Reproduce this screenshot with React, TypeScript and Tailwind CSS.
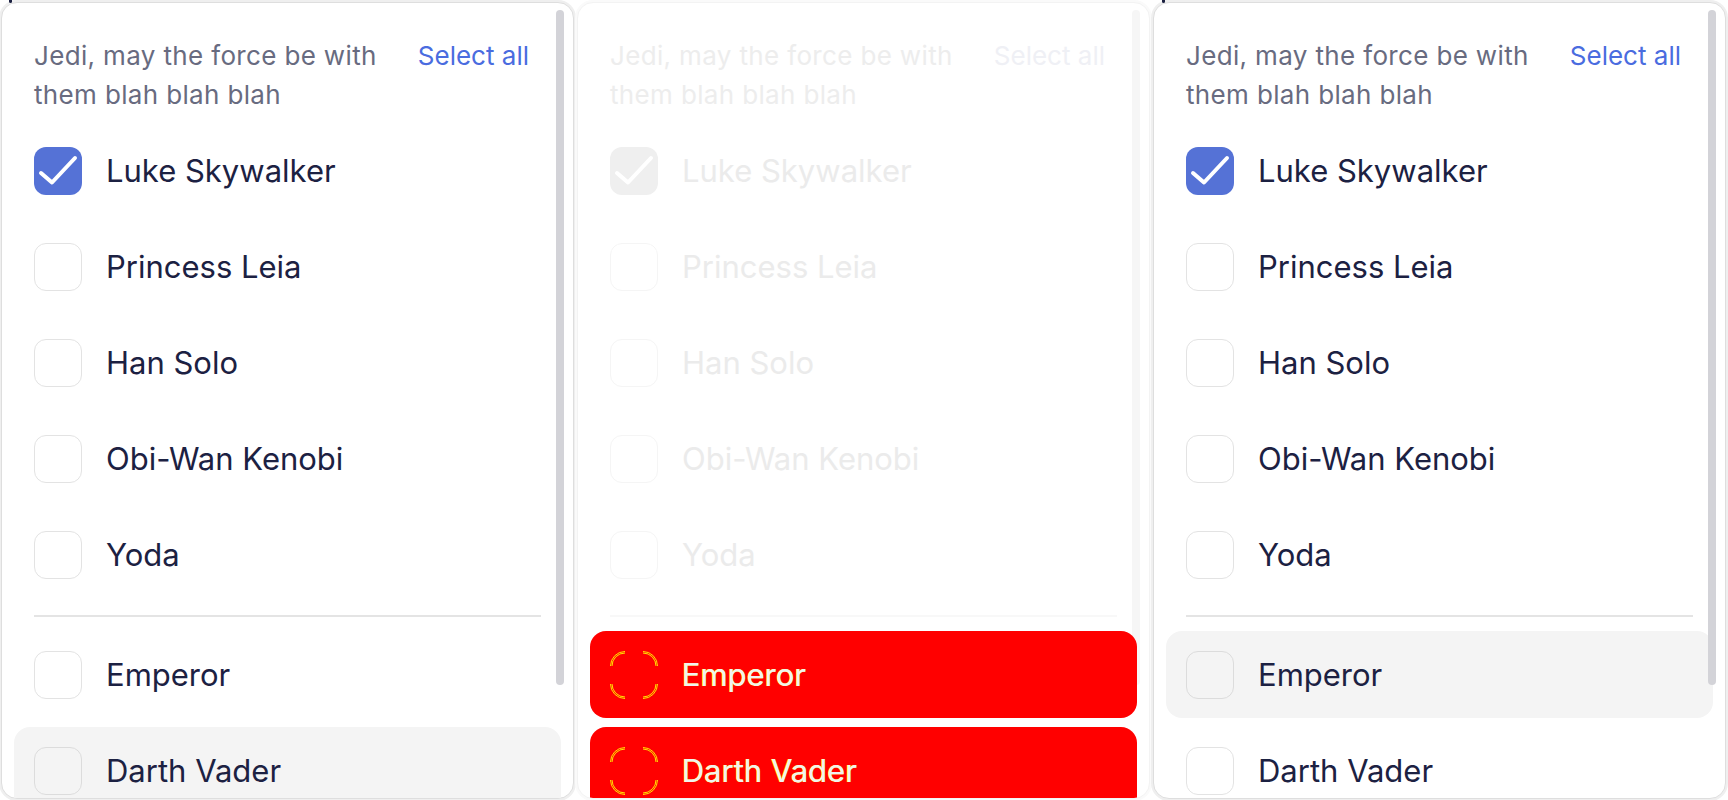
import React from "react";

type Mode = "normal" | "faded";
type RowState = "plain" | "hover" | "red";

const topNames = ["Luke Skywalker", "Princess Leia", "Han Solo", "Obi-Wan Kenobi", "Yoda"];
const bottomNames = ["Emperor", "Darth Vader"];

function CheckMark({ color }: { color: string }) {
  return (
    <svg width="48" height="48" viewBox="0 0 48 48" fill="none">
      <path d="M7 26 L18 35.5 L41 11" stroke={color} strokeWidth="4" strokeLinecap="round" strokeLinejoin="round" />
    </svg>
  );
}

function RedCorners() {
  const c = "#ffff00";
  return (
    <svg width="48" height="48" viewBox="0 0 48 48" fill="none">
      <g stroke={c} strokeWidth="0.9">
        <path d="M0.5 15 A14.5 14.5 0 0 1 15 0.5" />
        <path d="M33 0.5 A14.5 14.5 0 0 1 47.5 15" />
        <path d="M47.5 33 A14.5 14.5 0 0 1 33 47.5" />
        <path d="M15 47.5 A14.5 14.5 0 0 1 0.5 33" />
        <path d="M2 15 A13 13 0 0 1 15 2" />
        <path d="M33 2 A13 13 0 0 1 46 15" />
        <path d="M46 33 A13 13 0 0 1 33 46" />
        <path d="M15 46 A13 13 0 0 1 2 33" />
      </g>
    </svg>
  );
}

function Box({ checked, mode, state }: { checked: boolean; mode: Mode; state: RowState }) {
  if (state === "red") {
    return (
      <div className="w-[48px] h-[48px] shrink-0">
        <RedCorners />
      </div>
    );
  }
  if (checked) {
    return (
      <div
        className={
          mode === "faded"
            ? "w-[48px] h-[48px] shrink-0 rounded-[12px] bg-[#efefef]"
            : "w-[48px] h-[48px] shrink-0 rounded-[12px] bg-[#5572d6]"
        }
      >
        <CheckMark color="#ffffff" />
      </div>
    );
  }
  if (mode === "faded") {
    return <div className="w-[48px] h-[48px] shrink-0 rounded-[12px] border-[1.5px] border-[#f5f5f5] bg-white" />;
  }
  if (state === "hover") {
    return <div className="w-[48px] h-[48px] shrink-0 rounded-[12px] border-[1.5px] border-[#dcdcdc]" />;
  }
  return <div className="w-[48px] h-[48px] shrink-0 rounded-[12px] border-[1.5px] border-[#e3e3e3] bg-white" />;
}

function Row({ name, checked, mode, state }: { name: string; checked: boolean; mode: Mode; state: RowState }) {
  let rowCls = "flex items-center gap-6 h-[87px] pl-5 rounded-[16px] shrink-0";
  if (state === "hover") rowCls += " bg-[#f4f4f4]";
  if (state === "red") rowCls += " relative z-10 bg-[#ff0000]";
  let textCls = "text-[31px] leading-[40px] whitespace-nowrap";
  if (state === "red") textCls += " text-[#f1f1f1] [text-shadow:-0.8px_-0.5px_0_#ffff00]";
  else if (mode === "faded") textCls += " text-[#ebebeb]";
  else textCls += " text-[#1c2142]";
  return (
    <div className={rowCls}>
      <Box checked={checked} mode={mode} state={state} />
      <span className={textCls}>{name}</span>
    </div>
  );
}

function Panel({ mode, hoverName, redNames }: { mode: Mode; hoverName?: string; redNames?: string[] }) {
  const faded = mode === "faded";
  const stateOf = (n: string): RowState =>
    redNames && redNames.includes(n) ? "red" : hoverName === n ? "hover" : "plain";
  return (
    <div
      className={
        faded
          ? "relative w-[573px] h-[797px] shrink-0 rounded-[16px] border border-[#f3f3f3] shadow-[0_0_0_2px_#fafafa] bg-white overflow-hidden"
          : "relative w-[573px] h-[797px] shrink-0 rounded-[16px] border border-[#dedede] shadow-[0_0_0_2px_#efefef] bg-white overflow-hidden"
      }
    >
      <div className="flex items-start justify-between pl-[32px] pr-[44px] pt-[33px]">
        <p
          className={
            faded
              ? "w-[360px] text-[26px] leading-[39px] tracking-[0.35px] text-[#ededed]"
              : "w-[360px] text-[26px] leading-[39px] tracking-[0.35px] text-[#686b80]"
          }
        >
          Jedi, may the force be with them blah blah blah
        </p>
        <span
          className={
            faded
              ? "text-[26px] leading-[39px] text-[#eff0f5] whitespace-nowrap"
              : "text-[26px] leading-[39px] text-[#4a6cdf] whitespace-nowrap"
          }
        >
          Select all
        </span>
      </div>
      <div className="flex flex-col px-3 mt-[13px]">
        <div className="flex flex-col gap-[9px]">
          {topNames.map((n, i) => (
            <Row key={n} name={n} checked={i === 0} mode={mode} state={stateOf(n)} />
          ))}
        </div>
        <div className={faded ? "mx-5 mt-[17px] h-[2px] bg-[#f8f8f8]" : "mx-5 mt-[17px] h-[2px] bg-[#e4e4e4]"} />
        <div className="flex flex-col gap-[9px] mt-[14px]">
          {bottomNames.map((n) => (
            <Row key={n} name={n} checked={false} mode={mode} state={stateOf(n)} />
          ))}
        </div>
      </div>
      <div
        className={
          faded
            ? "absolute top-[7px] right-[9px] w-[8px] h-[675px] rounded-full bg-[#f6f6f6]"
            : "absolute top-[7px] right-[9px] w-[8px] h-[675px] rounded-full bg-[#d3d3d8]"
        }
      />
    </div>
  );
}

export default function App() {
  return (
    <div
      className="relative flex gap-[3px] pl-[1px] pt-[2px] w-[1728px] h-[800px] overflow-hidden bg-white"
      style={{ fontFamily: "Inter, 'Noto Sans', sans-serif" }}
    >
      <Panel mode="normal" hoverName="Darth Vader" />
      <Panel mode="faded" redNames={["Emperor", "Darth Vader"]} />
      <Panel mode="normal" hoverName="Emperor" />
      <div className="absolute left-[9px] top-0 w-[3px] h-[3px] rounded-b-full bg-[#1c2142]" />
      <div className="absolute left-[1162px] top-0 w-[3px] h-[3px] rounded-b-full bg-[#1c2142]" />
    </div>
  );
}
